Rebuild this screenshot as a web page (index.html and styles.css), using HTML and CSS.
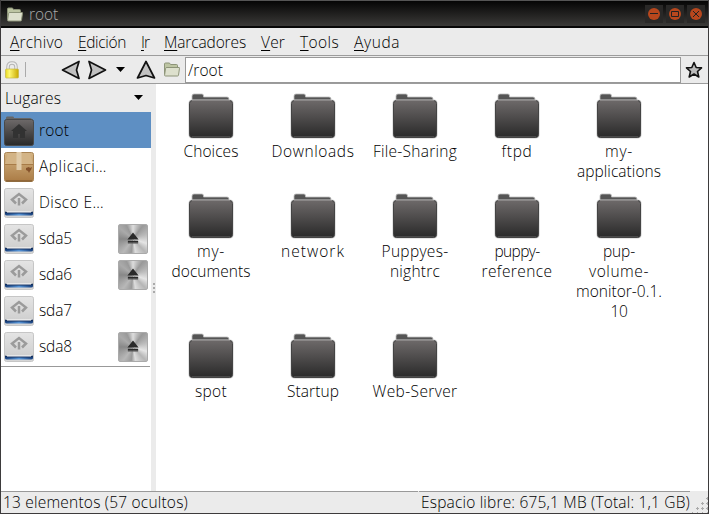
FILE: index.html
```
<!DOCTYPE html>
<html lang="es">
<head>
<meta charset="utf-8">
<title>root</title>
<link rel="stylesheet" href="styles.css">
</head>
<body>
<svg class="defs" width="0" height="0" aria-hidden="true">
  <defs>
    <linearGradient id="dark" x2="0" y2="1"><stop stop-color="#6d6969"/><stop offset="1" stop-color="#292929"/></linearGradient>
    <linearGradient id="silver" x2="0" y2="1"><stop stop-color="#e4e4e4"/><stop offset="1" stop-color="#cfcfcf"/></linearGradient>
    <linearGradient id="blue"><stop stop-color="#173f7c"/><stop offset=".5" stop-color="#5796d9"/><stop offset="1" stop-color="#173f7c"/></linearGradient>
    <linearGradient id="box" x2="0" y2="1"><stop stop-color="#d4b483"/><stop offset="1" stop-color="#aa7b45"/></linearGradient>
    <linearGradient id="gold"><stop stop-color="#e6d91e"/><stop offset=".3" stop-color="#fff873"/><stop offset="1" stop-color="#c9a900"/></linearGradient>
    <symbol id="folder" viewBox="0 0 46 46">
      <path d="M4 8V3q0-2 2-2h8q1.500 0 1.500 2v1H39q2 0 2 2v2z" fill="#555" stroke="#bcbcbc" stroke-width=".8"/>
      <rect x=".5" y="6.500" width="45" height="39" rx="4" fill="#c9c9c9"/>
      <rect x="1.500" y="7.500" width="43" height="37" rx="3" fill="url(#dark)" stroke="#444"/>
      <path d="M4 7.500h38" stroke="#8a8787"/>
      <path d="M4 43.500h38" stroke="#4a4a4a"/>
    </symbol>
    <symbol id="home" viewBox="0 0 30 30">
      <path d="M2 4V2q0-1.500 1-1.500h6q1 0 1 1.500h16q2 0 2 2z" fill="#666"/>
      <rect x=".5" y="3.500" width="29" height="26" rx="2" fill="url(#dark)" stroke="#494949"/>
      <path d="M15 8l8 7h-2v7h-5v-4h-2v4H9v-7H7z" fill="#323232"/>
    </symbol>
    <symbol id="package" viewBox="0 0 30 30">
      <rect x=".5" y=".5" width="29" height="29" rx="2" fill="url(#box)" stroke="#a98454"/>
      <path d="M4 1h22l3 11H1z" fill="#d3b486"/>
      <path d="M1 12.500h28" stroke="#a77b47"/>
      <path d="M12.500 0h5v18h-5z" fill="#dfcaa8"/>
      <path d="M22 16l3-1 1 1 2-1-1 3-1 1-1 2-1-2-2-1z" fill="#84512a"/>
      <path d="M2 29h26" stroke="#76532b"/>
    </symbol>
    <symbol id="drive" viewBox="0 0 30 30">
      <rect x=".5" y=".5" width="29" height="29" rx="2" fill="#d6d6d6" stroke="#c6c6c6"/>
      <path d="M1 24h28v2q0 1.500-2 1.500H3q-2 0-2-1.500z" fill="url(#blue)"/>
      <path d="M1 24.500q1 1 3 1h22q2 0 3-1v-1H1z" fill="#142f5c"/>
      <path d="M1 3q0-2 2-2h24q2 0 2 2v19q0 2-2 2H3q-2 0-2-2z" fill="url(#silver)"/>
      <path d="M3 24h24" stroke="#fff"/>
      <path d="M12 15.500l-4-4L15 6l7 5.500-4 4M15 10v7.500" fill="none" stroke="#9b9b9b" stroke-width="2.500"/>
    </symbol>
    <symbol id="eject" viewBox="0 0 30 30"><path d="M15 8l6 7.500H9zM9.500 17h11v2h-11z" fill="#292929"/><path d="M9.500 19.500h11" stroke="#666"/></symbol>
    <symbol id="small-folder" viewBox="0 0 17 15">
      <path d="M1.500 12V2q0-1 1-1h3.500q1 0 1.500 1.500h6q1 0 1 1V6" fill="#bdc5a3" stroke="#8d9479"/>
      <path d="M4 5.500h12q.700 0 .500.700l-1 7q-.1.800-1 .800h-12q-1 0-.9-1l.9-6.500q.1-1 1.500-1z" fill="#dde0cd" stroke="#8d9479"/>
    </symbol>
  </defs>
</svg>
<div class="window">
  <header class="titlebar">
    <svg class="title-icon"><use href="#small-folder"/></svg>
    <span class="title" data-width="29">root</span>
    <div class="controls">
      <svg viewBox="0 0 18 18"><circle cx="9" cy="9" r="6" fill="#b7471d"/><path d="M5 8.500h8" stroke="#222"/></svg>
      <svg viewBox="0 0 18 18"><circle cx="9" cy="9" r="6" fill="#b7471d"/><path d="M5.500 6.500h7v5h-7z" fill="none" stroke="#222"/></svg>
      <svg viewBox="0 0 18 18"><circle cx="9" cy="9" r="6" fill="#b7471d"/><path d="M6 6l6 6M12 6l-6 6" stroke="#222"/></svg>
    </div>
  </header>
  <nav class="menu">
    <span data-width="53"><u>A</u>rchivo</span>
    <span data-width="48"><u>E</u>dición</span>
    <span data-width="8"><u>I</u>r</span>
    <span data-width="82"><u>M</u>arcadores</span>
    <span data-width="24"><u>V</u>er</span>
    <span data-width="39"><u>T</u>ools</span>
    <span data-width="46"><u>A</u>yuda</span>
  </nav>
  <div class="toolbar">
    <svg class="lock" viewBox="0 0 16 18"><path d="M4 9V6q0-4 4-4t4 4v3" fill="none" stroke="#b5b5b5" stroke-width="3.500"/><path d="M4 9V6q0-4 4-4t4 4v3" fill="none" stroke="#eee" stroke-width="1.500"/><rect x="1.500" y="8" width="13" height="9" rx="1" fill="url(#gold)" stroke="#c6b84c" stroke-width=".7"/></svg>
    <span class="separator"></span>
    <svg class="nav back" viewBox="0 0 20 20"><path d="M1.500 10L18 1.500l-2.500 8.500 2.500 8.500z"/></svg>
    <svg class="nav forward" viewBox="0 0 20 20"><path d="M18.500 10L2 1.500 4.500 10 2 18.500z"/></svg>
    <svg class="caret" viewBox="0 0 9 5"><path d="M0 0h9L4.500 5z"/></svg>
    <svg class="nav up" viewBox="0 0 20 20"><path d="M10 1.500L18.500 18 10 15.500 1.500 18z"/></svg>
    <svg class="path-icon"><use href="#small-folder"/></svg>
    <div class="location"><span data-width="35">/root</span></div>
    <svg class="star" viewBox="0 0 18 18"><path d="M9 1.500l2.200 5 5.300.4-4 3.600 1.300 5.500L9 13l-4.800 3 1.300-5.500-4-3.600 5.300-.4z"/></svg>
  </div>
  <main class="body">
    <aside class="sidebar">
      <div class="side-header"><span data-width="56">Lugares</span><svg class="caret" viewBox="0 0 9 5"><path d="M0 0h9L4.500 5z"/></svg></div>
      <ul class="places">
        <li class="selected"><svg><use href="#home"/></svg><span data-width="30">root</span></li>
        <li><svg><use href="#package"/></svg><span data-width="68">Aplicaci…</span></li>
        <li><svg><use href="#drive"/></svg><span data-width="65">Disco E…</span></li>
        <li><svg><use href="#drive"/></svg><span data-width="33">sda5</span><svg class="eject"><use href="#eject"/></svg></li>
        <li><svg><use href="#drive"/></svg><span data-width="33">sda6</span><svg class="eject"><use href="#eject"/></svg></li>
        <li><svg><use href="#drive"/></svg><span data-width="33">sda7</span></li>
        <li><svg><use href="#drive"/></svg><span data-width="33">sda8</span><svg class="eject"><use href="#eject"/></svg></li>
      </ul>
    </aside>
    <div class="splitter"><i></i><i></i><i></i></div>
    <section class="files">
      <div class="file"><svg><use href="#folder"/></svg><span data-width="55">Choices</span></div>
      <div class="file"><svg><use href="#folder"/></svg><span data-width="83">Downloads</span></div>
      <div class="file"><svg><use href="#folder"/></svg><span data-width="84">File-Sharing</span></div>
      <div class="file"><svg><use href="#folder"/></svg><span data-width="31">ftpd</span></div>
      <div class="file"><svg><use href="#folder"/></svg><span data-width="28">my-</span><span data-width="84">applications</span></div>
      <div class="file"><svg><use href="#folder"/></svg><span data-width="28">my-</span><span data-width="79">documents</span></div>
      <div class="file"><svg><use href="#folder"/></svg><span data-width="64">network</span></div>
      <div class="file"><svg><use href="#folder"/></svg><span data-width="67">Puppyes-</span><span data-width="50">nightrc</span></div>
      <div class="file"><svg><use href="#folder"/></svg><span data-width="45">puppy-</span><span data-width="71">reference</span></div>
      <div class="file"><svg><use href="#folder"/></svg><span data-width="32">pup-</span><span data-width="60">volume-</span><span data-width="86">monitor-0.1.</span><span data-width="17">10</span></div>
      <div class="file"><svg><use href="#folder"/></svg><span data-width="32">spot</span></div>
      <div class="file"><svg><use href="#folder"/></svg><span data-width="52">Startup</span></div>
      <div class="file"><svg><use href="#folder"/></svg><span data-width="85">Web-Server</span></div>
    </section>
  </main>
  <footer class="status">
    <div class="count"><span data-width="185">13 elementos (57 ocultos)</span></div>
    <div class="space"><span data-width="269">Espacio libre: 675,1 MB (Total: 1,1 GB)</span></div>
    <div class="grip"></div>
  </footer>
</div>
<script src="fit.js"></script>
</body>
</html>
```
FILE: fit.js
```
// Spread each label's letters so that it takes up its set width.
document.querySelectorAll('[data-width]').forEach(function (el) {
  var target = Number(el.dataset.width);
  var natural = el.getBoundingClientRect().width;
  var gap = (target - natural) / el.textContent.length;
  el.style.letterSpacing = gap.toFixed(3) + 'px';
});
```
FILE: styles.css
```
* { box-sizing: border-box; }
body { margin: 0; font: 300 15.5px/20px "Open Sans", "Noto Sans", sans-serif; color: #000; }
.defs { position: absolute; }
svg { display: block; flex: none; }
span { white-space: nowrap; }
.window { width: 709px; height: 514px; display: flex; flex-direction: column; background: #ebebeb; border: 1px solid #3d3b3c; border-top: 0; overflow: hidden; }
.titlebar { height: 28px; flex: none; display: flex; align-items: center; padding: 1px 3px 0 5px; background: linear-gradient(#050505, #3b3a38); border-top: 1px solid #555; border-bottom: 2px solid #080808; color: #aaa; }
.title-icon { width: 17px; height: 15px; margin-right: 6px; }
.controls { margin-left: auto; display: flex; gap: 3px; }
.controls svg { width: 18px; height: 18px; background: #292827; }
.menu { height: 28px; flex: none; display: flex; align-items: center; gap: 15px; padding: 1px 9px 0; border-bottom: 1px solid #9c9c9c; }
.menu span { flex: none; }
u { text-underline-offset: 2px; text-decoration-thickness: 1px; }
.toolbar { height: 28px; flex: none; display: flex; align-items: center; padding-left: 3px; border-bottom: 1px solid #9c9c9c; }
.lock { width: 16px; height: 18px; }
.separator { width: 1px; height: 15px; margin-left: 5px; background: #aaa; }
.nav { width: 20px; height: 20px; }
.nav path { fill: #c1c1c1; stroke: #111; stroke-width: 1.7; stroke-linejoin: round; }
.back { margin-left: 35px; }
.forward { margin-left: 6px; }
.caret { width: 9px; height: 5px; }
.toolbar .caret { margin-left: 9px; }
.up { margin-left: 11px; }
.path-icon { width: 17px; height: 15px; margin-left: 7px; }
.location { flex: 1; height: 26px; margin: 1px 0 0 5px; padding: 2px 2px 0; background: #fff; border: 1px solid #999; }
.star { width: 18px; height: 18px; margin: 0 5px 0 4px; }
.star path { fill: #bbb; stroke: #111; stroke-width: 1.6; stroke-linejoin: round; }
.body { flex: 1; min-height: 0; display: flex; background: #fff; }
.sidebar { width: 150px; flex: none; }
.side-header { height: 28px; display: flex; align-items: center; justify-content: space-between; padding: 0 8px 1px 4px; background: #ebebeb; }
.places { list-style: none; margin: 0 1px 0 0; padding: 0 0 2px; border-bottom: 1px solid #999; }
.places li { width: 150px; height: 36px; display: flex; align-items: center; padding: 0 3px; }
.places li svg { width: 30px; height: 30px; margin: 1px 5px 0 0; }
.places .selected { background: #5e8fc3; }
.places li .eject { margin: 1px 0 0 auto; border-radius: 2px; border: 1px solid #aaa; background: conic-gradient(#ddd, #999 10%, #bbb 20%, #e5e5e5 30%, #b5b5b5 38%, #ddd 47%, #999 52%, #b8b8b8 60%, #888 75%, #aaa 86%, #999 93%, #ddd); }
.splitter { width: 5px; flex: none; display: flex; flex-direction: column; align-items: center; justify-content: center; gap: 2px; background: #ebebeb; }
.splitter i { width: 2px; height: 2px; background: #aaa; }
.files { flex: 1; display: grid; grid-template-columns: repeat(5, 102px); align-content: start; grid-template-rows: 100px 140px 100px; padding: 9px 0 0 4px; }
.file { display: flex; flex-direction: column; align-items: center; }
.file svg { width: 46px; height: 46px; margin-bottom: 2px; }
.status { height: 22px; flex: none; display: flex; }
.status > div { border-top: 1px solid #999; }
.count { flex: 1; padding-left: 2px; margin-right: 1px; }
.space { width: 271px; padding-left: 2px; }
.status .grip { width: 18px; border: 0; align-self: flex-end; height: 17px; background: radial-gradient(circle, #aaa 1px, transparent 1.4px) 0 0 / 5px 5px; clip-path: polygon(100% 0, 100% 100%, 0 100%); }
```
